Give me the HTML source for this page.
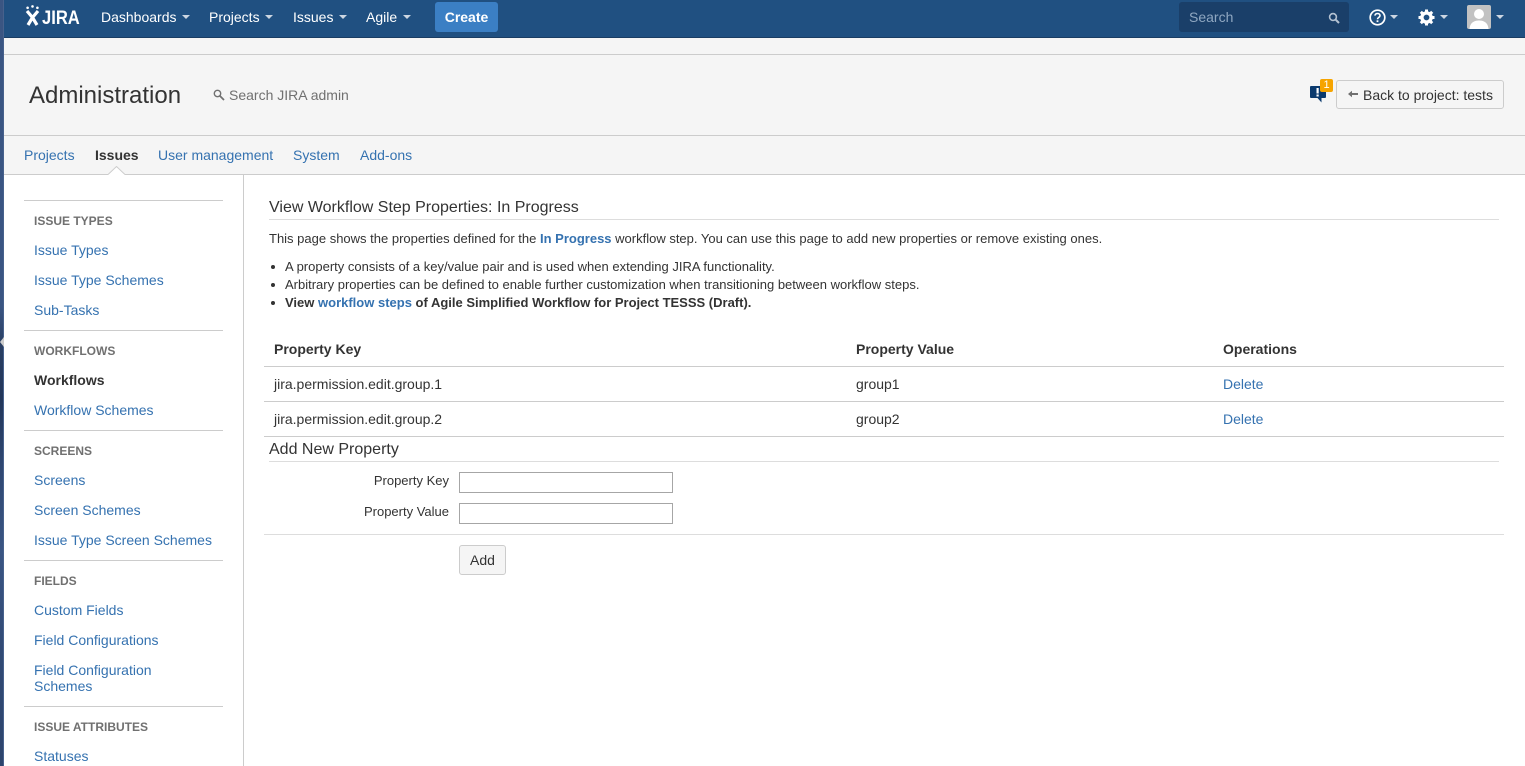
<!DOCTYPE html>
<html>
<head>
<meta charset="utf-8">
<style>
html,body{margin:0;padding:0;width:1525px;height:766px;overflow:hidden;background:#fff;font-family:"Liberation Sans",sans-serif;color:#333;font-size:14px}
.t{position:absolute;white-space:nowrap;line-height:20px}
.l{color:#3572b0}
.b{font-weight:bold}
.h{position:absolute;background:#ccc;height:1px}
.nav{color:#fff;top:7px}
.car{position:absolute;width:0;height:0;border-left:4px solid transparent;border-right:4px solid transparent;border-top:4px solid #ccd6e2;top:15px}
.cat{position:absolute;left:34px;font-size:12px;font-weight:bold;color:#707070;line-height:20px;white-space:nowrap}
.s13{font-size:13px}
.inp{position:absolute;left:459px;width:212px;height:19px;border:1px solid #a6a6a6;background:#fff}
</style>
</head>
<body>
<div style="position:absolute;left:0;top:0;width:4px;height:766px;background:linear-gradient(#3a5582,#3a5582 40%,#2a3f63 45%,#22365a 52%,#2e4670 60%,#3a5583 72%,#314a75 85%,#2d446c)"></div>
<div style="position:absolute;left:3px;top:0;width:1px;height:766px;background:#47618c"></div>
<div style="position:absolute;left:0;top:337px;width:0;height:0;border-top:5px solid transparent;border-bottom:5px solid transparent;border-right:4px solid #ccc"></div>

<div style="position:absolute;left:4px;top:0;width:1521px;height:766px;background:#fff"></div>
<!-- top nav -->
<div style="position:absolute;left:4px;top:0;width:1521px;height:38px;background:#205081;border-bottom:0"></div>
<div style="position:absolute;left:4px;top:37px;width:1521px;height:1px;background:#1a3d63"></div>
<svg style="position:absolute;left:25px;top:5px" width="16" height="21" viewBox="0 0 16 21"><g fill="#fff"><circle cx="2.6" cy="2.8" r="1.3"/><circle cx="7.5" cy="1.4" r="1.3"/><circle cx="12.4" cy="2.8" r="1.3"/></g><path d="M2 6 L7.5 12.5 L3 20 M13 6 L7.5 12.5 L12 20" fill="none" stroke="#fff" stroke-width="3.2"/></svg>
<div class="t b" style="left:42px;top:8px;font-size:19.5px;color:#fff;transform:scaleX(.85);transform-origin:left center">JIRA</div>
<div class="t nav" style="left:101px">Dashboards</div><div class="car" style="left:182px"></div>
<div class="t nav" style="left:209px">Projects</div><div class="car" style="left:265px"></div>
<div class="t nav" style="left:293px">Issues</div><div class="car" style="left:339px"></div>
<div class="t nav" style="left:366px">Agile</div><div class="car" style="left:403px"></div>
<div style="position:absolute;left:435px;top:2px;width:63px;height:30px;background:#3b7fc4;border-radius:3px"></div>
<div class="t b" style="left:435px;top:7px;width:63px;text-align:center;color:#fff">Create</div>
<div style="position:absolute;left:1179px;top:2px;width:170px;height:30px;background:#1a3f69;border-radius:3px"></div>
<div class="t" style="left:1189px;top:7px;color:#8fa7c1">Search</div>
<svg style="position:absolute;left:1328px;top:12px" width="12" height="12" viewBox="0 0 12 12"><circle cx="5" cy="5" r="3.4" fill="none" stroke="#b4c2d2" stroke-width="1.6"/><path d="M7.5 7.5 L11 11" stroke="#b4c2d2" stroke-width="2"/></svg>
<svg style="position:absolute;left:1369px;top:9px" width="17" height="17" viewBox="0 0 17 17"><circle cx="8.5" cy="8.5" r="7.3" fill="none" stroke="#fff" stroke-width="1.7"/><path d="M6 6.6 C6 3.8 11 3.8 11 6.6 C11 8.4 8.5 8.3 8.5 10.3" fill="none" stroke="#fff" stroke-width="1.6"/><rect x="7.6" y="11.3" width="1.8" height="1.8" fill="#fff"/></svg>
<div class="car" style="left:1390px"></div>
<svg style="position:absolute;left:1418px;top:9px" width="17" height="17" viewBox="0 0 17 17"><circle cx="8.5" cy="8.5" r="4.6" fill="none" stroke="#fff" stroke-width="3.4"/><g stroke="#fff" stroke-width="3"><path d="M8.5 0.5V3.5M8.5 13.5V16.5M0.5 8.5H3.5M13.5 8.5H16.5M2.8 2.8L5 5M12 12L14.2 14.2M2.8 14.2L5 12M12 5L14.2 2.8"/></g></svg>
<div class="car" style="left:1440px"></div>
<svg style="position:absolute;left:1467px;top:5px" width="24" height="24" viewBox="0 0 24 24"><rect width="24" height="24" rx="2" fill="#c2c2c2"/><circle cx="12" cy="9" r="5" fill="#fff"/><path d="M2.5 24 C3 17 8 15.5 12 15.5 C16 15.5 21 17 21.5 24Z" fill="#fff"/></svg>
<div class="car" style="left:1496px"></div>

<!-- header -->
<div style="position:absolute;left:4px;top:38px;width:1521px;height:137px;background:#f5f5f5"></div>
<div class="h" style="left:4px;top:54px;width:1521px"></div>
<div class="h" style="left:4px;top:135px;width:1521px"></div>
<div class="h" style="left:4px;top:174px;width:1521px"></div>
<div class="t" style="left:29px;top:81px;font-size:24px;line-height:30px;color:#333">Administration</div>
<svg style="position:absolute;left:213px;top:89px" width="12" height="12" viewBox="0 0 12 12"><circle cx="4.5" cy="4.5" r="3.2" fill="none" stroke="#707070" stroke-width="1.4"/><path d="M7 7L11 11" stroke="#707070" stroke-width="1.8"/></svg>
<div class="t" style="left:229px;top:85px;color:#707070">Search JIRA admin</div>
<svg style="position:absolute;left:1310px;top:85px" width="16" height="18" viewBox="0 0 16 18"><path d="M1 1H15Q16 1 16 2V12Q16 13 15 13H11.5V17.5L7.5 13H1Q0 13 0 12V2Q0 1 1 1Z" fill="#0b3a6e"/><rect x="6.5" y="3" width="2.2" height="5.5" fill="#fff"/><rect x="6.5" y="9.5" width="2.2" height="2" fill="#fff"/></svg>
<div style="position:absolute;left:1320px;top:79px;width:13px;height:13px;background:#f6a400;border-radius:2px;color:#fff;font-size:11px;line-height:13px;text-align:center">1</div>
<div style="position:absolute;left:1336px;top:80px;width:166px;height:27px;border:1px solid #ccc;border-radius:3px;background:#f5f5f5"></div>
<svg style="position:absolute;left:1348px;top:90px" width="10" height="8" viewBox="0 0 10 8"><path d="M0 4L4 0.8V3H10V5H4V7.2Z" fill="#707070"/></svg>
<div class="t" style="left:1363px;top:85px;color:#333">Back to project: tests</div>

<!-- tabs -->
<div class="t l" style="left:24px;top:145px">Projects</div>
<div class="t b" style="left:95px;top:145px">Issues</div>
<div class="t l" style="left:158px;top:145px">User management</div>
<div class="t l" style="left:293px;top:145px">System</div>
<div class="t l" style="left:360px;top:145px">Add-ons</div>
<svg style="position:absolute;left:108px;top:166px" width="17" height="9" viewBox="0 0 17 9"><path d="M0 9L8.5 0.5L17 9Z" fill="#fff"/><path d="M0 8.5L8.5 0.5L17 8.5" fill="none" stroke="#ccc"/></svg>

<!-- sidebar -->
<div style="position:absolute;left:243px;top:175px;width:1px;height:591px;background:#ccc"></div>
<div class="h" style="left:24px;top:200px;width:199px"></div>
<div class="cat" style="top:211px">ISSUE TYPES</div>
<div class="t l" style="left:34px;top:240px">Issue Types</div>
<div class="t l" style="left:34px;top:270px">Issue Type Schemes</div>
<div class="t l" style="left:34px;top:300px">Sub-Tasks</div>
<div class="h" style="left:24px;top:330px;width:199px"></div>
<div class="cat" style="top:341px">WORKFLOWS</div>
<div class="t b" style="left:34px;top:370px">Workflows</div>
<div class="t l" style="left:34px;top:400px">Workflow Schemes</div>
<div class="h" style="left:24px;top:430px;width:199px"></div>
<div class="cat" style="top:441px">SCREENS</div>
<div class="t l" style="left:34px;top:470px">Screens</div>
<div class="t l" style="left:34px;top:500px">Screen Schemes</div>
<div class="t l" style="left:34px;top:530px">Issue Type Screen Schemes</div>
<div class="h" style="left:24px;top:560px;width:199px"></div>
<div class="cat" style="top:571px">FIELDS</div>
<div class="t l" style="left:34px;top:600px">Custom Fields</div>
<div class="t l" style="left:34px;top:630px">Field Configurations</div>
<div class="t l" style="left:34px;top:660px">Field Configuration</div>
<div class="t l" style="left:34px;top:676px">Schemes</div>
<div class="h" style="left:24px;top:706px;width:199px"></div>
<div class="cat" style="top:717px">ISSUE ATTRIBUTES</div>
<div class="t l" style="left:34px;top:746px">Statuses</div>

<!-- main -->
<div class="t" style="left:269px;top:198px;font-size:16px">View Workflow Step Properties: In Progress</div>
<div class="h" style="left:269px;top:219px;width:1230px;background:#ddd"></div>
<div class="t s13" style="left:269px;top:229px">This page shows the properties defined for the <span class="b l">In Progress</span> workflow step. You can use this page to add new properties or remove existing ones.</div>
<div style="position:absolute;left:271px;top:265px;width:4px;height:4px;border-radius:50%;background:#333"></div>
<div class="t s13" style="left:285px;top:257px">A property consists of a key/value pair and is used when extending JIRA functionality.</div>
<div style="position:absolute;left:271px;top:283px;width:4px;height:4px;border-radius:50%;background:#333"></div>
<div class="t s13" style="left:285px;top:275px">Arbitrary properties can be defined to enable further customization when transitioning between workflow steps.</div>
<div style="position:absolute;left:271px;top:301px;width:4px;height:4px;border-radius:50%;background:#333"></div>
<div class="t s13 b" style="left:285px;top:293px">View <span class="l">workflow steps</span> of Agile Simplified Workflow for Project TESSS (Draft).</div>

<div class="t b" style="left:274px;top:339px">Property Key</div>
<div class="t b" style="left:856px;top:339px">Property Value</div>
<div class="t b" style="left:1223px;top:339px">Operations</div>
<div class="h" style="left:264px;top:366px;width:1240px"></div>
<div class="t" style="left:274px;top:374px">jira.permission.edit.group.1</div>
<div class="t" style="left:856px;top:374px">group1</div>
<div class="t l" style="left:1223px;top:374px">Delete</div>
<div class="h" style="left:264px;top:401px;width:1240px"></div>
<div class="t" style="left:274px;top:409px">jira.permission.edit.group.2</div>
<div class="t" style="left:856px;top:409px">group2</div>
<div class="t l" style="left:1223px;top:409px">Delete</div>
<div class="h" style="left:264px;top:436px;width:1240px"></div>
<div class="t" style="left:269px;top:440px;font-size:16px">Add New Property</div>
<div class="h" style="left:269px;top:461px;width:1230px;background:#ddd"></div>
<div class="t s13" style="right:1076px;top:471px">Property Key</div>
<div class="inp" style="top:472px"></div>
<div class="t s13" style="right:1076px;top:502px">Property Value</div>
<div class="inp" style="top:503px"></div>
<div class="h" style="left:264px;top:534px;width:1240px;background:#ddd"></div>
<div style="position:absolute;left:459px;top:545px;width:45px;height:28px;border:1px solid #ccc;border-radius:3px;background:#f5f5f5"></div>
<div class="t" style="left:459px;top:550px;width:47px;text-align:center">Add</div>
</body>
</html>
